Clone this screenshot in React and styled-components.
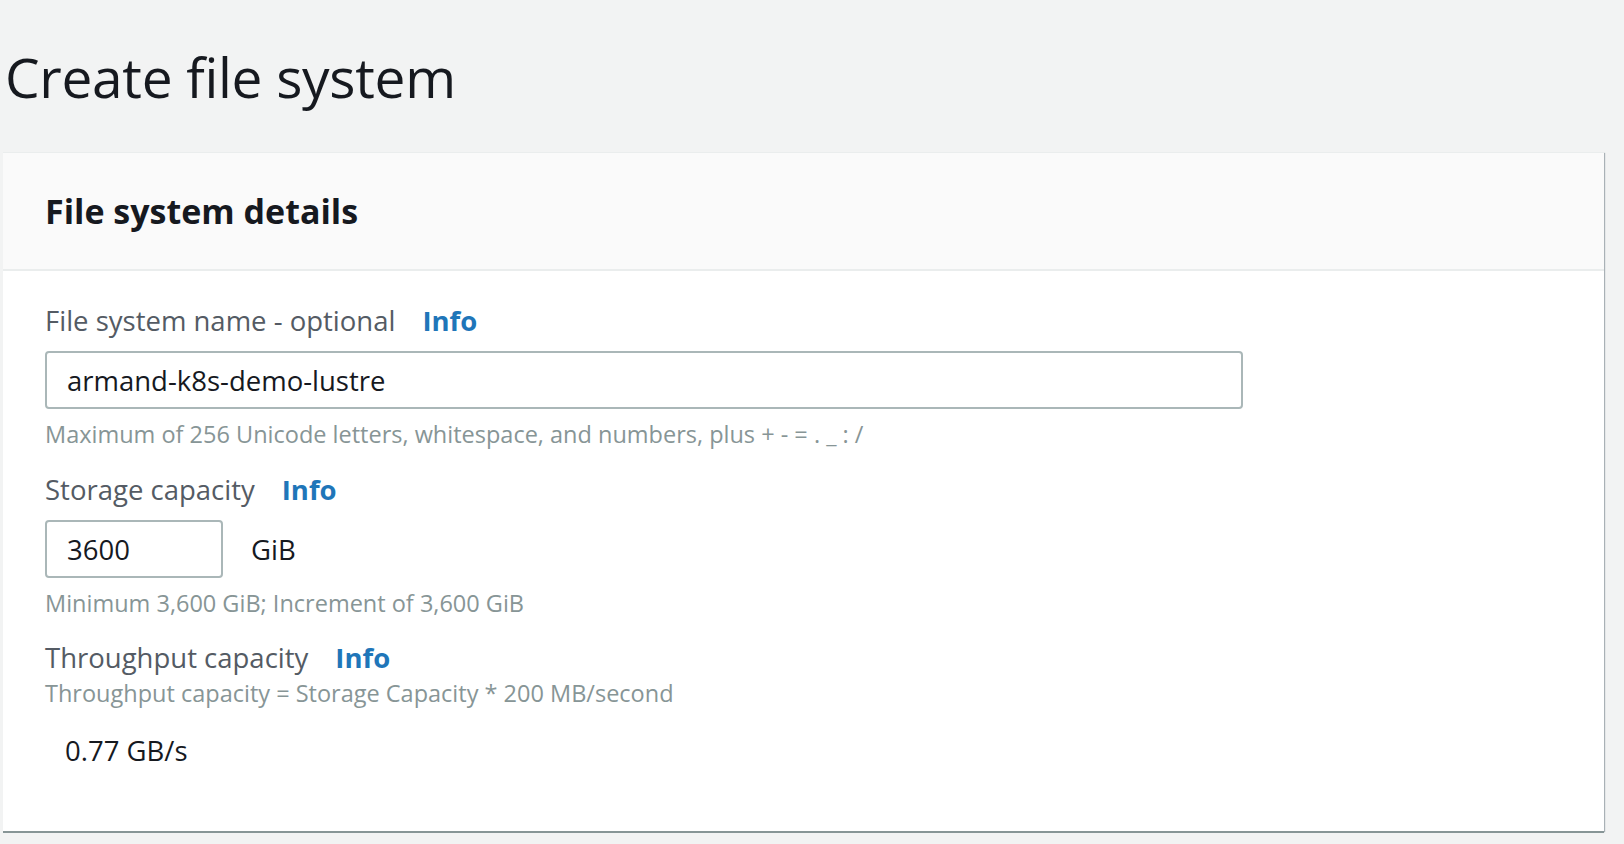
import styled, { createGlobalStyle } from 'styled-components'

const GlobalStyle = createGlobalStyle`
  html, body {
    margin: 0;
    padding: 0;
    background: #f2f3f3;
    font-family: "Open Sans", "Noto Sans", sans-serif;
    color: #16191f;
  }
`

const Page = styled.div`
  padding: 0 20px 14px 3px;
`

const Title = styled.h1`
  margin: 0;
  padding: 42px 0 0 2px;
  height: 152px;
  box-sizing: border-box;
  font-size: 55px;
  font-weight: 400;
  line-height: 70px;
  color: #16191f;
  letter-spacing: -0.3px;
`

const Card = styled.section`
  background: #fff;
  border-top: 1px solid #eaeded;
  box-shadow: 0 2px 0 0 #879596, 1px 1px 1px 0 rgba(0, 27, 43, 0.3);
`

const CardHeader = styled.header`
  background: #fafafa;
  height: 118px;
  box-sizing: border-box;
  border-bottom: 2px solid #eaeded;
  padding: 0 42px;
  display: flex;
  align-items: center;
`

const CardTitle = styled.h2`
  margin: 0;
  font-size: 34px;
  font-weight: 700;
  line-height: 40px;
  color: #16191f;
`

const CardBody = styled.div`
  padding: 30px 42px 62px;
`

const Field = styled.div`
  margin-bottom: ${p => p.$gap || 0}px;
`

const Label = styled.div`
  display: flex;
  align-items: center;
  gap: 27px;
  font-size: 27.5px;
  line-height: 40px;
  color: #545b64;
`

const Info = styled.a`
  color: #1f76b9;
  font-weight: 700;
  text-decoration: none;
`

const InputRow = styled.div`
  display: flex;
  align-items: center;
  gap: 28px;
  margin-top: 10px;
`

const TextInput = styled.div`
  width: ${p => p.$width}px;
  height: 58px;
  box-sizing: border-box;
  border: 2px solid #aab7b8;
  border-radius: 4px;
  padding: 0 20px;
  display: flex;
  align-items: center;
  font-size: 27.5px;
  color: #16191f;
`

const Unit = styled.span`
  font-size: 27.5px;
  color: #16191f;
`

const Hint = styled.div`
  font-size: 23.5px;
  line-height: 34px;
  color: #879596;
  margin-top: ${p => p.$top || 0}px;
`

const Value = styled.div`
  font-size: 27.5px;
  color: #16191f;
  padding: 22px 0 0 20px;
`

export default function App() {
  return (
    <>
      <GlobalStyle />
      <Page>
        <Title>Create file system</Title>
        <Card>
          <CardHeader>
            <CardTitle>File system details</CardTitle>
          </CardHeader>
          <CardBody>
            <Field $gap={19}>
              <Label>
                File system name - optional <Info>Info</Info>
              </Label>
              <InputRow>
                <TextInput $width={1198}>armand-k8s-demo-lustre</TextInput>
              </InputRow>
              <Hint $top={8}>
                Maximum of 256 Unicode letters, whitespace, and numbers, plus + - = . _ : /
              </Hint>
            </Field>
            <Field $gap={18}>
              <Label>
                Storage capacity <Info>Info</Info>
              </Label>
              <InputRow>
                <TextInput $width={178}>3600</TextInput>
                <Unit>GiB</Unit>
              </InputRow>
              <Hint $top={8}>Minimum 3,600 GiB; Increment of 3,600 GiB</Hint>
            </Field>
            <Field>
              <Label>
                Throughput capacity <Info>Info</Info>
              </Label>
              <Hint $top={-2}>Throughput capacity = Storage Capacity * 200 MB/second</Hint>
              <Value>0.77 GB/s</Value>
            </Field>
          </CardBody>
        </Card>
      </Page>
    </>
  )
}
